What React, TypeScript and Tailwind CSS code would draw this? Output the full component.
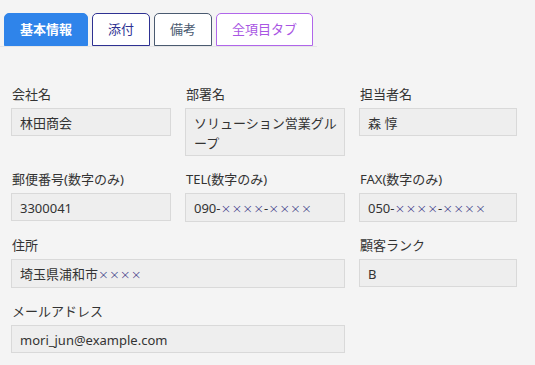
import React from "react";

const font = { fontFamily: '"Noto Sans", "Noto Sans CJK JP", sans-serif' };

const X = ({ n }: { n: number }) => (
  <span className="font-['DejaVu_Sans',sans-serif] font-extralight text-[#2f2c80]">{"×".repeat(n)}</span>
);

type Field = { label: string; value: React.ReactNode; span?: string };

const fields: Field[] = [
  { label: "会社名", value: "林田商会" },
  { label: "部署名", value: "ソリューション営業グループ" },
  { label: "担当者名", value: "森 惇" },
  { label: "郵便番号(数字のみ)", value: "3300041" },
  { label: "TEL(数字のみ)", value: <>090-<X n={4} />-<X n={4} /></> },
  { label: "FAX(数字のみ)", value: <>050-<X n={4} />-<X n={4} /></> },
  { label: "住所", value: <>埼玉県浦和市<X n={4} /></>, span: "col-span-2" },
  { label: "顧客ランク", value: "B" },
  { label: "メールアドレス", value: "mori_jun@example.com", span: "col-span-2" },
];

const tabs = [
  { name: "基本情報", cls: "bg-[#2f84ea] text-white font-bold border border-[#2f84ea]" },
  { name: "添付", cls: "bg-white text-[#2e3192] border border-[#2e3192]" },
  { name: "備考", cls: "bg-white text-[#4a5a70] border border-[#4a5a70]" },
  { name: "全項目タブ", cls: "bg-white text-[#a956e3] border border-[#b066ea]" },
];

export default function App() {
  return (
    <div className="w-[535px] bg-white" style={font}>
      <div className="bg-[#f4f4f4] pb-3">
        <div className="flex gap-1 pl-1 pt-[13px] border-b border-[#e6e6e6] w-[317px]">
          {tabs.map((t) => (
            <div
              key={t.name}
              className={`h-[33px] px-[15px] rounded-t-[5px] text-[13px] leading-[31px] ${t.cls}`}
            >
              {t.name}
            </div>
          ))}
        </div>

        <div className="grid grid-cols-[160px_160px_158px] gap-x-[14px] gap-y-[13px] ml-[11px] mt-[37px] items-start">
          {fields.map((f) => (
            <div key={f.label} className={f.span ?? ""}>
              <div className="pl-px mb-[4px] text-[13px] leading-[20px] text-[#333]">{f.label}</div>
              <div className="border border-[#d9d9d9] bg-[#eeeeee] pl-2 pr-[6px] pt-[4px] pb-[2px] text-[13px] leading-[20px] text-[#333] break-all">
                {f.value}
              </div>
            </div>
          ))}
        </div>
      </div>
    </div>
  );
}
